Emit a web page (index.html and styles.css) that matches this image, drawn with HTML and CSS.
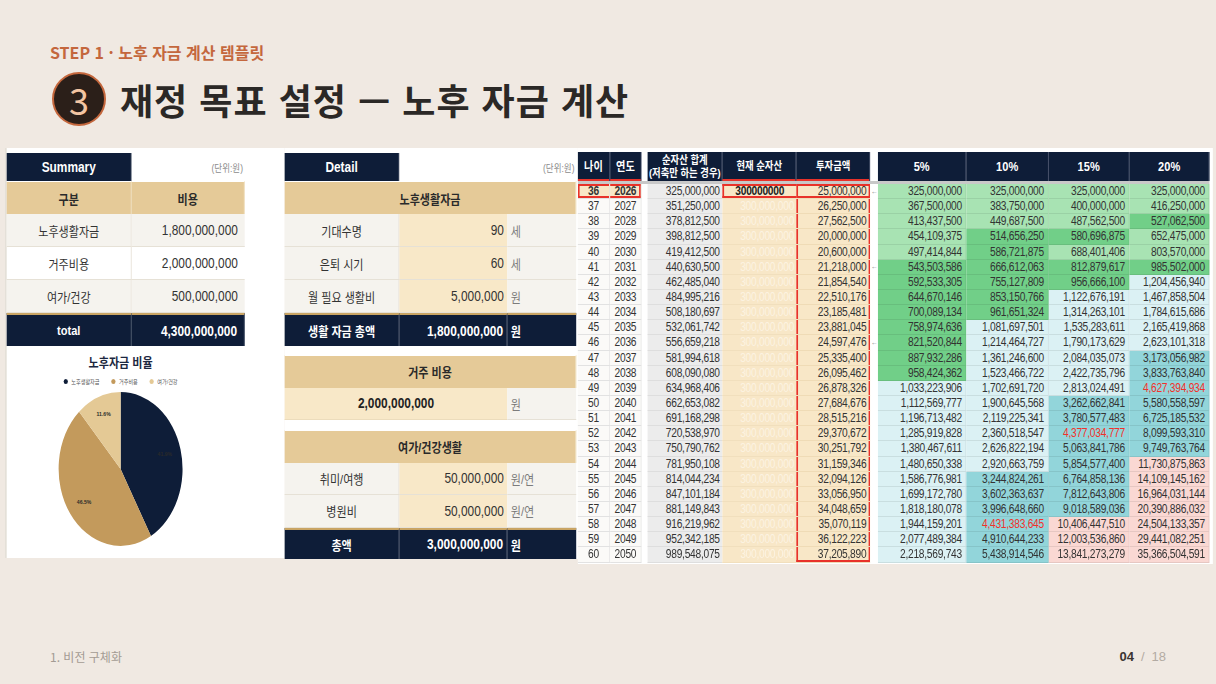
FILE: index.html
```html
<!DOCTYPE html>
<html lang="ko">
<head>
<meta charset="utf-8">
<title>재정 목표 설정 — 노후 자금 계산</title>
<link rel="stylesheet" href="styles.css">
</head>
<body>
<div class="slide">
  <header class="head">
    <p class="step">STEP 1 · 노후 자금 계산 템플릿</p>
    <h1 class="title"><span class="badge">3</span>재정 목표 설정 — 노후 자금 계산</h1>
  </header>

  <div class="clip">
    <div class="shot">
      <section class="sum">
        <div class="tbl sumtbl">
          <div class="nv hd">Summary</div>
          <div class="note">(단위:원)</div>
          <div class="tan">구분</div><div class="tan last">비용</div>
          <div class="lb gr">노후생활자금</div><div class="num gr">1,800,000,000</div>
          <div class="lb">거주비용</div><div class="num">2,000,000,000</div>
          <div class="lb gr">여가/건강</div><div class="num gr">500,000,000</div>
          <div class="nv tot">total</div><div class="nv tot numb">4,300,000,000</div>
        </div>
        <div class="chart">
          <p class="ch-title">노후자금 비율</p>
          <ul class="legend">
            <li><i class="dot d1"></i>노후생활자금</li>
            <li><i class="dot d2"></i>거주비용</li>
            <li><i class="dot d3"></i>여가/건강</li>
          </ul>
          <svg class="pie" width="268" height="160" viewBox="0 0 268 160">
            <path d="M134 79 L134 2 A73 77 0 0 1 169.7 146.1 Z" fill="#0e1d38"/>
            <path d="M134 79 L169.7 146.1 A73 77 0 0 1 85.2 21.7 Z" fill="#c39a5c"/>
            <path d="M134 79 L85.2 21.7 A73 77 0 0 1 134 2 Z" fill="#e4c995"/>
            <text x="186" y="66">41.9%</text>
            <text x="91" y="114">46.5%</text>
            <text x="114" y="26">11.6%</text>
          </svg>
        </div>
      </section>

      <section class="det">
        <div class="tbl dt1">
          <div class="nv hd">Detail</div>
          <div class="note s2">(단위:원)</div>
          <div class="tan s3">노후생활자금</div>
          <div class="lb gr">기대수명</div><div class="num pe">90</div><div class="u gr">세</div>
          <div class="lb gr">은퇴 시기</div><div class="num pe">60</div><div class="u gr">세</div>
          <div class="lb gr">월 필요 생활비</div><div class="num pe">5,000,000</div><div class="u gr">원</div>
          <div class="nv tot">생활 자금 총액</div><div class="nv tot numb">1,800,000,000</div><div class="nv tot ub">원</div>
        </div>
        <div class="tbl dt2">
          <div class="tan s3">거주 비용</div>
          <div class="pe s2 big">2,000,000,000</div><div class="u gr">원</div>
        </div>
        <div class="tbl dt3">
          <div class="tan s3">여가/건강생활</div>
          <div class="lb gr">취미/여행</div><div class="num pe">50,000,000</div><div class="u gr">원/연</div>
          <div class="lb gr">병원비</div><div class="num pe">50,000,000</div><div class="u gr">원/연</div>
          <div class="nv tot">총액</div><div class="nv tot numb">3,000,000,000</div><div class="nv tot ub">원</div>
        </div>
      </section>

      <section class="sheet">
        <div class="grid">
          <div class="h rb">나이</div><div class="h rb">연도</div><div class="gp"></div>
          <div class="h sm"><span>순자산 합계<br>(저축만 하는 경우)</span></div><div class="h rb sm">현재 순자산</div><div class="h rb sm">투자금액</div><div class="gp"></div>
          <div class="h ph">5%</div><div class="h ph">10%</div><div class="h ph">15%</div><div class="h ph">20%</div>
          <div class="dv"></div>

          <div class="a t36 x36l">36</div><div class="a t36 x36r">2026</div><div class="gp"></div><div class="n">325,000,000</div><div class="c x36c">300000000</div><div class="v x36v">25,000,000</div><div class="gp ar">←</div><div class="p lg">325,000,000</div><div class="p lg">325,000,000</div><div class="p lg">325,000,000</div><div class="p lg">325,000,000</div>
          <div class="a">37</div><div class="a">2027</div><div class="gp"></div><div class="n">351,250,000</div><div class="c">300,000,000</div><div class="v">26,250,000</div><div class="gp"></div><div class="p lg">367,500,000</div><div class="p lg">383,750,000</div><div class="p lg">400,000,000</div><div class="p lg">416,250,000</div>
          <div class="a">38</div><div class="a">2028</div><div class="gp"></div><div class="n">378,812,500</div><div class="c">300,000,000</div><div class="v">27,562,500</div><div class="gp"></div><div class="p lg">413,437,500</div><div class="p lg">449,687,500</div><div class="p lg">487,562,500</div><div class="p dg">527,062,500</div>
          <div class="a">39</div><div class="a">2029</div><div class="gp"></div><div class="n">398,812,500</div><div class="c">300,000,000</div><div class="v">20,000,000</div><div class="gp"></div><div class="p lg">454,109,375</div><div class="p dg">514,656,250</div><div class="p dg">580,696,875</div><div class="p lg">652,475,000</div>
          <div class="a">40</div><div class="a">2030</div><div class="gp"></div><div class="n">419,412,500</div><div class="c">300,000,000</div><div class="v">20,600,000</div><div class="gp"></div><div class="p lg">497,414,844</div><div class="p dg">586,721,875</div><div class="p lg">688,401,406</div><div class="p lg">803,570,000</div>
          <div class="a">41</div><div class="a">2031</div><div class="gp"></div><div class="n">440,630,500</div><div class="c">300,000,000</div><div class="v">21,218,000</div><div class="gp ar">←</div><div class="p dg">543,503,586</div><div class="p dg">666,612,063</div><div class="p dg">812,879,617</div><div class="p dg">985,502,000</div>
          <div class="a">42</div><div class="a">2032</div><div class="gp"></div><div class="n">462,485,040</div><div class="c">300,000,000</div><div class="v">21,854,540</div><div class="gp"></div><div class="p dg">592,533,305</div><div class="p dg">755,127,809</div><div class="p dg">956,666,100</div><div class="p cy">1,204,456,940</div>
          <div class="a">43</div><div class="a">2033</div><div class="gp"></div><div class="n">484,995,216</div><div class="c">300,000,000</div><div class="v">22,510,176</div><div class="gp"></div><div class="p dg">644,670,146</div><div class="p dg">853,150,766</div><div class="p cy">1,122,676,191</div><div class="p cy">1,467,858,504</div>
          <div class="a">44</div><div class="a">2034</div><div class="gp"></div><div class="n">508,180,697</div><div class="c">300,000,000</div><div class="v">23,185,481</div><div class="gp"></div><div class="p dg">700,089,134</div><div class="p dg">961,651,324</div><div class="p cy">1,314,263,101</div><div class="p cy">1,784,615,686</div>
          <div class="a">45</div><div class="a">2035</div><div class="gp"></div><div class="n">532,061,742</div><div class="c">300,000,000</div><div class="v">23,881,045</div><div class="gp"></div><div class="p dg">758,974,636</div><div class="p cy">1,081,697,501</div><div class="p cy">1,535,283,611</div><div class="p cy">2,165,419,868</div>
          <div class="a">46</div><div class="a">2036</div><div class="gp"></div><div class="n">556,659,218</div><div class="c">300,000,000</div><div class="v">24,597,476</div><div class="gp ar">←</div><div class="p dg">821,520,844</div><div class="p cy">1,214,464,727</div><div class="p cy">1,790,173,629</div><div class="p cy">2,623,101,318</div>
          <div class="a">47</div><div class="a">2037</div><div class="gp"></div><div class="n">581,994,618</div><div class="c">300,000,000</div><div class="v">25,335,400</div><div class="gp"></div><div class="p dg">887,932,286</div><div class="p cy">1,361,246,600</div><div class="p cy">2,084,035,073</div><div class="p tl">3,173,056,982</div>
          <div class="a">48</div><div class="a">2038</div><div class="gp"></div><div class="n">608,090,080</div><div class="c">300,000,000</div><div class="v">26,095,462</div><div class="gp"></div><div class="p dg">958,424,362</div><div class="p cy">1,523,466,722</div><div class="p cy">2,422,735,796</div><div class="p tl">3,833,763,840</div>
          <div class="a">49</div><div class="a">2039</div><div class="gp"></div><div class="n">634,968,406</div><div class="c">300,000,000</div><div class="v">26,878,326</div><div class="gp"></div><div class="p cy">1,033,223,906</div><div class="p cy">1,702,691,720</div><div class="p cy">2,813,024,491</div><div class="p tl rd">4,627,394,934</div>
          <div class="a">50</div><div class="a">2040</div><div class="gp"></div><div class="n">662,653,082</div><div class="c">300,000,000</div><div class="v">27,684,676</div><div class="gp"></div><div class="p cy">1,112,569,777</div><div class="p cy">1,900,645,568</div><div class="p tl">3,262,662,841</div><div class="p tl">5,580,558,597</div>
          <div class="a">51</div><div class="a">2041</div><div class="gp"></div><div class="n">691,168,298</div><div class="c">300,000,000</div><div class="v">28,515,216</div><div class="gp"></div><div class="p cy">1,196,713,482</div><div class="p cy">2,119,225,341</div><div class="p tl">3,780,577,483</div><div class="p tl">6,725,185,532</div>
          <div class="a">52</div><div class="a">2042</div><div class="gp"></div><div class="n">720,538,970</div><div class="c">300,000,000</div><div class="v">29,370,672</div><div class="gp"></div><div class="p cy">1,285,919,828</div><div class="p cy">2,360,518,547</div><div class="p tl rd">4,377,034,777</div><div class="p tl">8,099,593,310</div>
          <div class="a">53</div><div class="a">2043</div><div class="gp"></div><div class="n">750,790,762</div><div class="c">300,000,000</div><div class="v">30,251,792</div><div class="gp"></div><div class="p cy">1,380,467,611</div><div class="p cy">2,626,822,194</div><div class="p tl">5,063,841,786</div><div class="p tl">9,749,763,764</div>
          <div class="a">54</div><div class="a">2044</div><div class="gp"></div><div class="n">781,950,108</div><div class="c">300,000,000</div><div class="v">31,159,346</div><div class="gp"></div><div class="p cy">1,480,650,338</div><div class="p cy">2,920,663,759</div><div class="p tl">5,854,577,400</div><div class="p pk">11,730,875,863</div>
          <div class="a">55</div><div class="a">2045</div><div class="gp"></div><div class="n">814,044,234</div><div class="c">300,000,000</div><div class="v">32,094,126</div><div class="gp"></div><div class="p cy">1,586,776,981</div><div class="p tl">3,244,824,261</div><div class="p tl">6,764,858,136</div><div class="p pk">14,109,145,162</div>
          <div class="a">56</div><div class="a">2046</div><div class="gp"></div><div class="n">847,101,184</div><div class="c">300,000,000</div><div class="v">33,056,950</div><div class="gp"></div><div class="p cy">1,699,172,780</div><div class="p tl">3,602,363,637</div><div class="p tl">7,812,643,806</div><div class="p pk">16,964,031,144</div>
          <div class="a">57</div><div class="a">2047</div><div class="gp"></div><div class="n">881,149,843</div><div class="c">300,000,000</div><div class="v">34,048,659</div><div class="gp"></div><div class="p cy">1,818,180,078</div><div class="p tl">3,996,648,660</div><div class="p tl">9,018,589,036</div><div class="p pk">20,390,886,032</div>
          <div class="a">58</div><div class="a">2048</div><div class="gp"></div><div class="n">916,219,962</div><div class="c">300,000,000</div><div class="v">35,070,119</div><div class="gp"></div><div class="p cy">1,944,159,201</div><div class="p tl rd">4,431,383,645</div><div class="p pk">10,406,447,510</div><div class="p pk">24,504,133,357</div>
          <div class="a">59</div><div class="a">2049</div><div class="gp"></div><div class="n">952,342,185</div><div class="c">300,000,000</div><div class="v">36,122,223</div><div class="gp"></div><div class="p cy">2,077,489,384</div><div class="p tl">4,910,644,233</div><div class="p pk">12,003,536,860</div><div class="p pk">29,441,082,251</div>
          <div class="a">60</div><div class="a">2050</div><div class="gp"></div><div class="n">989,548,075</div><div class="c">300,000,000</div><div class="v vend">37,205,890</div><div class="gp"></div><div class="p cy">2,218,569,743</div><div class="p tl">5,438,914,546</div><div class="p pk">13,841,273,279</div><div class="p pk">35,366,504,591</div>
        </div>
      </section>
    </div>
  </div>

  <footer class="foot">
    <span class="crumb">1. 비전 구체화</span>
    <span class="pager"><b>04</b><span class="sep">/</span>18</span>
  </footer>
</div>
</body>
</html>
```

FILE: styles.css
```css
* { box-sizing: border-box; margin: 0; padding: 0; }
html, body { width: 1216px; height: 684px; overflow: hidden; }
body {
  background: #f0e9e2;
  font-family: "Noto Sans CJK KR", "Liberation Sans", sans-serif;
  color: #2b2826;
}
.slide { width: 1216px; height: 684px; display: flex; flex-direction: column; }

/* header */
.head { padding: 42px 0 0 50px; }
.step { font-size: 16px; line-height: 20px; font-weight: 700; color: #c4673d; }
.title {
  margin-top: 9px; height: 56px;
  display: flex; align-items: center;
  font-size: 36px; line-height: 1; font-weight: 700; color: #2b2826;
  letter-spacing: 1px;
}
.badge {
  width: 54px; height: 54px; border-radius: 50%;
  background: #2b1f19; border: 2px solid #c4673d;
  color: #f3c5a3; font-size: 36px; font-weight: 400; letter-spacing: 0;
  display: flex; align-items: center; justify-content: center;
  margin: 0 14px 0 2px;
}

/* screenshot panel (horizontally compressed like the source capture) */
.clip { margin: 21px 0 0 5px; width: 1208px; height: 416px; overflow: hidden; }
.shot {
  width: 1421px; height: 416px;
  display: flex; align-items: flex-start;
  transform: scaleX(0.85); transform-origin: 0 0;
  font-family: "Liberation Sans", "Noto Sans CJK KR", sans-serif;
  color: #333;
}

/* generic small tables */
.tbl { display: grid; }
.tbl > div {
  display: flex; align-items: center; justify-content: center;
  font-size: 13px; color: #333; white-space: nowrap;
}
.nv { background: #0e1d38; color: #fff !important; font-weight: 700; border-right: 1px solid #5a6478; }
.hd { font-size: 14px !important; }
.note { justify-content: flex-end !important; font-size: 10px !important; color: #8c8c8c !important; background: #fff; padding-right: 2px; }
.tan { background: #e5ca98; font-weight: 700; color: #2a2a2a !important; border-right: 1px solid #f2e6cc; border-top: 1px solid #fff; }
.lb { border-bottom: 1px solid #e6e1d6; border-right: 1px solid #e6e1d6; }
.gr { background: #f5f3ee; }
.pe { background: #f8e8c8; }
.num { justify-content: flex-end !important; padding-right: 8px; font-size: 14px !important; border-bottom: 1px solid #e6e1d6; }
.numb { justify-content: flex-end !important; padding-right: 8px; font-size: 14px !important; }
.tot { border-top: 2px solid #c9a463; }
.u { justify-content: flex-start !important; padding-left: 4px; color: #7c7c7c !important; border-bottom: 1px solid #e6e1d6; }
.ub { justify-content: flex-start !important; padding-left: 4px; border-right: 0; }
.s2 { grid-column: span 2; }
.s3 { grid-column: span 3; }
.big { font-weight: 700; font-size: 14px !important; color: #222 !important; border-bottom: 1px solid #ecdcbc; }

/* summary */
.sum { width: 329px; height: 410px; background: #fff; border-left: 2px solid #e4e0d8; padding-top: 5px; }
.sumtbl { grid-template-columns: 147px 133px; grid-template-rows: 28px repeat(5, 33px); }
.sumtbl .num { padding-right: 8px; }

.chart { width: 268px; padding-top: 8px; display: flex; flex-direction: column; align-items: center; }
.ch-title { font-size: 13px; line-height: 18px; font-weight: 700; color: #1b2740; }
.legend { list-style: none; display: flex; gap: 14px; margin-top: 4px; height: 10px; align-items: center; }
.legend li { display: flex; align-items: center; gap: 4px; font-size: 6px; color: #555; }
.dot { width: 5px; height: 5px; border-radius: 50%; display: block; }
.d1 { background: #0e1d38; }
.d2 { background: #c39a5c; }
.d3 { background: #e4c995; }
.pie { display: block; margin-top: 4px; }
.pie text { font: 700 6px "Liberation Sans", sans-serif; fill: #2a2a2a; text-anchor: middle; }

/* detail */
.det { width: 345px; height: 411px; background: #fff; padding-top: 5px; }
.dt1 { grid-template-columns: 135px 127px 81px; grid-template-rows: 28px repeat(5, 33px); }
.dt2 { grid-template-columns: 135px 127px 81px; grid-template-rows: 32.5px 32.5px; margin-top: 9px; }
.dt3 { grid-template-columns: 135px 127px 81px; grid-template-rows: 32.5px 32.5px 32.5px 31.5px; margin-top: 10px; }
.det .num { padding-right: 4px; }
.det .numb { padding-right: 4px; }

/* spreadsheet */
.sheet { width: 747px; height: 416px; background: #fff; padding-top: 4px; }
.grid {
  display: grid;
  grid-template-columns: 37.6px 37.6px 7px 88.2px 87px 87px 8.2px 104.7px 96.5px 95.3px 94.1px;
  grid-template-rows: 29px 3px repeat(25, 15.15px);
  font-size: 12px; letter-spacing: -0.3px; color: #333;
}
.grid > div { display: flex; align-items: center; white-space: nowrap; overflow: hidden; line-height: 1; }
.h {
  background: #0e1d38; color: #fff; font-weight: 700; justify-content: center;
  border-right: 1px solid #59627a; letter-spacing: 0; font-family: "Liberation Sans", "Noto Sans CJK KR", sans-serif;
}
.h.sm { font-size: 11px; }
.h span { text-align: center; line-height: 13px; }
.h.ph { font-size: 13px; }
.rb { box-shadow: inset 0 -2px #e8322a; }
.dv { grid-column: 1 / -1; background: #c8c8c8; }
.gp { background: #fff; }
.ar { justify-content: center; font-size: 8px; color: #8a8a8a; }
.a { justify-content: center; background: #fbfaf8; border-right: 1px solid #e2e2e2; border-bottom: 1px solid #e2e2e2; }
.n { justify-content: flex-end; padding-right: 3.5px; background: #ececec; border-bottom: 1px solid #dedede; }
.c { justify-content: flex-end; padding-right: 3px; background: #f8e7c7; color: #fcf3e2; border-bottom: 1px solid #f1dfbd; }
.v {
  justify-content: flex-end; padding-right: 5px; background: #f8e7c7;
  border-bottom: 1px solid #efdbb6;
  box-shadow: inset 2px 0 #e8322a, inset -2px 0 #e8322a;
}
.p { justify-content: flex-end; padding-right: 4.5px; border-right: 1px solid rgba(0,0,0,0.08); border-bottom: 1px solid rgba(0,0,0,0.08); color: #333; }
.lg { background: #a8e3b3; }
.dg { background: #71cf88; }
.cy { background: #dbf1f4; }
.tl { background: #92d5da; }
.pk { background: #fad8d3; }
.rd { color: #f2302a; }

.t36 { background: #f8e7c7; font-weight: 700; }
.x36l { box-shadow: inset 2px 0 #e8322a, inset 0 2px #e8322a, inset 0 -2px #e8322a; }
.x36r { box-shadow: inset -2px 0 #e8322a, inset 0 2px #e8322a, inset 0 -2px #e8322a; }
.x36c { justify-content: center; padding-right: 0; color: #222; font-weight: 700; box-shadow: inset 2px 0 #e8322a, inset 0 2px #e8322a, inset 0 -2px #e8322a; }
.x36v { box-shadow: inset 2px 0 #e8322a, inset -2px 0 #e8322a, inset 0 2px #e8322a, inset 0 -2px #e8322a; }
.vend { box-shadow: inset 2px 0 #e8322a, inset -2px 0 #e8322a, inset 0 -2px #e8322a; }

/* footer */
.foot {
  margin-top: auto; padding: 0 50px 17px;
  display: flex; justify-content: space-between;
  font-size: 12px; line-height: 20px; color: #a39b93;
}
.pager { font-family: "Liberation Sans", sans-serif; font-size: 13px; color: #b3aba3; }
.pager b { color: #3a3431; }
.sep { margin: 0 7px; }
```
